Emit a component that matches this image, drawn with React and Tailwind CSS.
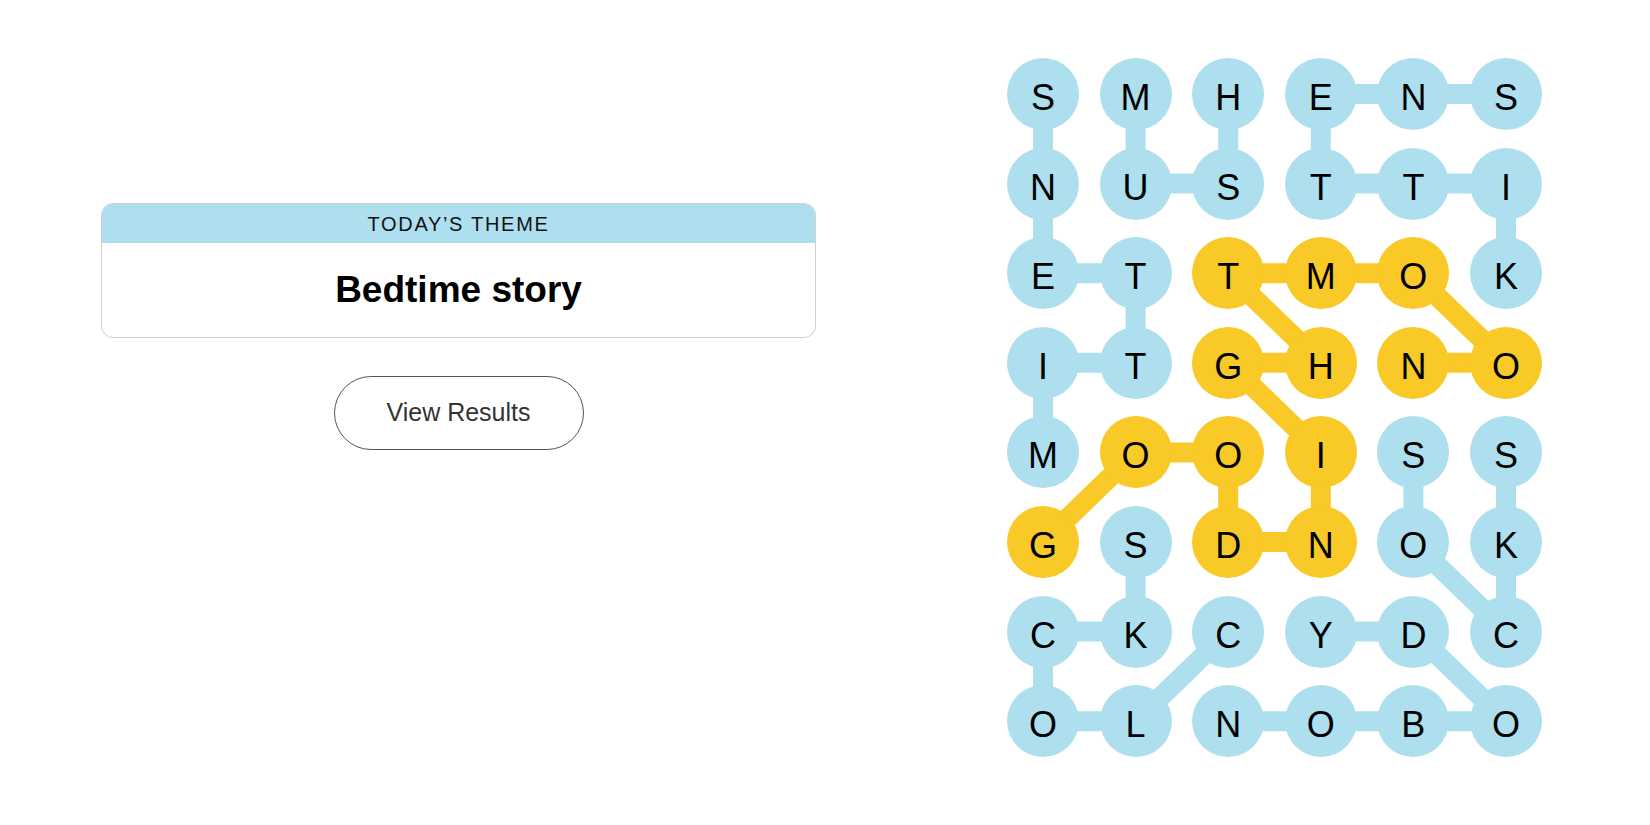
import React from "react";

const rows = [
  "SMHENS",
  "NUSTTI",
  "ETTMOK",
  "ITGHNO",
  "MOOISS",
  "GSDNOK",
  "CKCYDC",
  "OLNOBO",
];

// spangram cells
const gold = new Set([
  "5-0", "4-1", "4-2", "5-2", "5-3", "4-3", "3-2", "3-3", "2-2", "2-3", "2-4", "3-5", "3-4",
]);

const blueLinks = [
  // MITTENS
  [[4, 0], [3, 0]], [[3, 0], [3, 1]], [[3, 1], [2, 1]], [[2, 1], [2, 0]], [[2, 0], [1, 0]], [[1, 0], [0, 0]],
  // MUSH
  [[0, 1], [1, 1]], [[1, 1], [1, 2]], [[1, 2], [0, 2]],
  // KITTENS
  [[2, 5], [1, 5]], [[1, 5], [1, 4]], [[1, 4], [1, 3]], [[1, 3], [0, 3]], [[0, 3], [0, 4]], [[0, 4], [0, 5]],
  // SOCKS
  [[4, 4], [5, 4]], [[5, 4], [6, 5]], [[6, 5], [5, 5]], [[5, 5], [4, 5]],
  // CLOCKS
  [[6, 2], [7, 1]], [[7, 1], [7, 0]], [[7, 0], [6, 0]], [[6, 0], [6, 1]], [[6, 1], [5, 1]],
  // NOBODY
  [[7, 2], [7, 3]], [[7, 3], [7, 4]], [[7, 4], [7, 5]], [[7, 5], [6, 4]], [[6, 4], [6, 3]],
];

const goldLinks = [
  [[5, 0], [4, 1]], [[4, 1], [4, 2]], [[4, 2], [5, 2]], [[5, 2], [5, 3]], [[5, 3], [4, 3]],
  [[4, 3], [3, 2]], [[3, 2], [3, 3]], [[3, 3], [2, 2]], [[2, 2], [2, 3]], [[2, 3], [2, 4]],
  [[2, 4], [3, 5]], [[3, 5], [3, 4]],
];

const cx = (c) => 36 + c * 92.6;
const cy = (r) => 36 + r * 89.6;

function Board() {
  return (
    <div className="relative">
      <svg className="absolute inset-0" width="535" height="700">
        {blueLinks.map(([a, b], i) => (
          <line key={"b" + i} x1={cx(a[1])} y1={cy(a[0])} x2={cx(b[1])} y2={cy(b[0])} stroke="#aedfee" strokeWidth="20" />
        ))}
        {goldLinks.map(([a, b], i) => (
          <line key={"g" + i} x1={cx(a[1])} y1={cy(a[0])} x2={cx(b[1])} y2={cy(b[0])} stroke="#f8c927" strokeWidth="20" />
        ))}
      </svg>
      <div className="relative grid grid-cols-[repeat(6,72px)] auto-rows-[72px] gap-x-[20.6px] gap-y-[17.6px]">
        {rows.map((row, r) =>
          row.split("").map((ch, c) => (
            <div
              key={r + "-" + c}
              className={
                "w-[72px] h-[72px] rounded-full flex items-center justify-center pt-[8px] text-[36px] text-black " +
                (gold.has(r + "-" + c) ? "bg-[#f8c927]" : "bg-[#aedfee]")
              }
            >
              {ch}
            </div>
          ))
        )}
      </div>
    </div>
  );
}

export default function App() {
  return (
    <div className="w-full h-[825px] bg-white flex font-['Liberation_Sans',Arial,sans-serif]">
      {/* Left: theme + button */}
      <div className="ml-[101px] pt-[203px] w-[715px] shrink-0 flex flex-col items-center">
        <div className="w-full border border-[#d0d0d0] rounded-[12px] overflow-hidden">
          <div className="h-[39px] bg-[#aedfee] flex items-center justify-center text-[20px] tracking-[1.7px] text-[#121212]">
            TODAY’S THEME
          </div>
          <div className="h-[94px] flex items-center justify-center text-[37px] font-bold text-black">
            Bedtime story
          </div>
        </div>
        <button className="mt-[38px] w-[250px] h-[74px] rounded-full border border-[#555] text-[25px] text-[#333] bg-white">
          View Results
        </button>
      </div>

      {/* Right: board */}
      <div className="ml-[191px] pt-[58px]">
        <Board />
      </div>
    </div>
  );
}
